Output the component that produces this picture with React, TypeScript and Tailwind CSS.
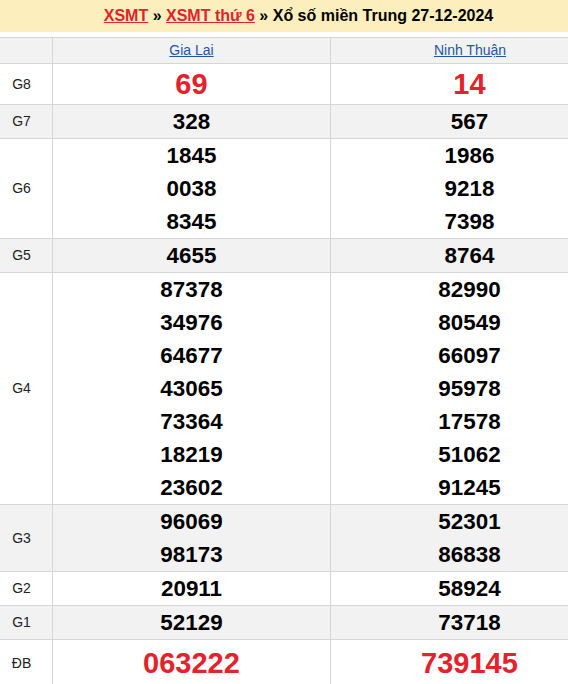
const rows = [
  { label: "G8", a: ["69"], b: ["14"], big: true, gray: false },
  { label: "G7", a: ["328"], b: ["567"], gray: true },
  { label: "G6", a: ["1845", "0038", "8345"], b: ["1986", "9218", "7398"], gray: false },
  { label: "G5", a: ["4655"], b: ["8764"], gray: true },
  {
    label: "G4",
    a: ["87378", "34976", "64677", "43065", "73364", "18219", "23602"],
    b: ["82990", "80549", "66097", "95978", "17578", "51062", "91245"],
    gray: false,
  },
  { label: "G3", a: ["96069", "98173"], b: ["52301", "86838"], gray: true },
  { label: "G2", a: ["20911"], b: ["58924"], gray: false },
  { label: "G1", a: ["52129"], b: ["73718"], gray: true },
  { label: "ĐB", a: ["063222"], b: ["739145"], big: true, gray: false, last: true },
];

function Cell({ nums, big, last }: { nums: string[]; big?: boolean; last?: boolean }) {
  return (
    <div className="w-[278px] shrink-0 border-r border-[#d6d6d6] flex flex-col items-center justify-center">
      {nums.map((n) => (
        <div
          key={n}
          className={
            big
              ? `text-[29px] font-bold text-[#e3222b] ${last ? "leading-[46px]" : "leading-[40px]"}`
              : "text-[22.4px] leading-[33px] font-bold text-black"
          }
        >
          {n}
        </div>
      ))}
    </div>
  );
}

export default function App() {
  return (
    <div className="w-[568px] h-[684px] overflow-hidden bg-white font-['Liberation_Sans',Arial,sans-serif]">
      <div className="w-[608px]">
        {/* Title bar */}
        <div className="h-[32px] bg-[#fdefbd] pr-[11px] flex justify-center pt-[4px] text-[16px] font-bold text-black">
          <span>
            <a className="text-[#e3222b] underline">XSMT</a>
            {" » "}
            <a className="text-[#e3222b] underline">XSMT thứ 6</a>
            {" » Xổ số miền Trung 27-12-2024"}
          </span>
        </div>

        {/* Table */}
        <div className="mt-[5px] border-t border-[#d6d6d6]">
          <div className="flex h-[26px] bg-[#f2f2f2] border-b border-[#d6d6d6]">
            <div className="w-[53px] shrink-0 border-r border-[#d6d6d6]" />
            <div className="w-[278px] shrink-0 border-r border-[#d6d6d6] flex items-center justify-center">
              <a className="text-[14px] text-[#1f55a3] underline">Gia Lai</a>
            </div>
            <div className="w-[278px] shrink-0 flex items-center justify-center">
              <a className="text-[14px] text-[#1f55a3] underline">Ninh Thuận</a>
            </div>
          </div>
          {rows.map((r) => (
            <div
              key={r.label}
              className={`flex border-b border-[#d6d6d6] ${r.gray ? "bg-[#f2f2f2]" : "bg-white"}`}
            >
              <div className="w-[53px] shrink-0 border-r border-[#d6d6d6] flex items-center justify-center pr-[9px] text-[14px] text-[#222]">
                {r.label}
              </div>
              <Cell nums={r.a} big={r.big} last={r.last} />
              <Cell nums={r.b} big={r.big} last={r.last} />
            </div>
          ))}
        </div>
      </div>
    </div>
  );
}
